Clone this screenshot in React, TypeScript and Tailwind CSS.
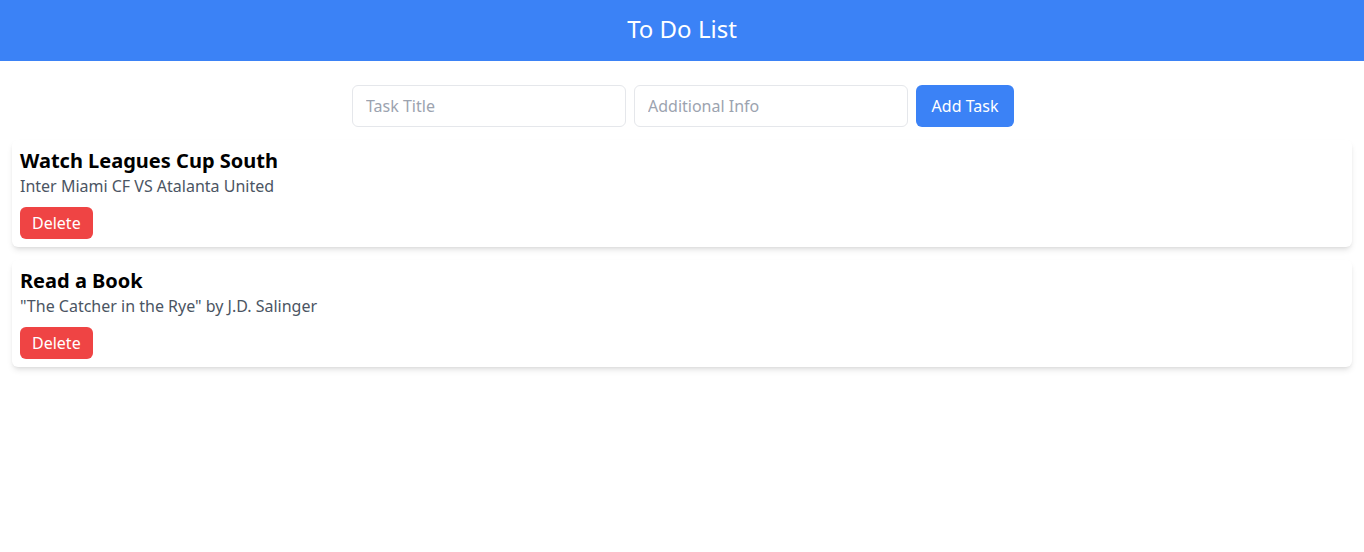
import React, { useState } from "react";

interface Task {
    id: number;
    title: string;
    info: string;
}

const initialTasks: Task[] = [
    { id: 1, title: "Watch Leagues Cup South", info: "Inter Miami CF VS Atalanta United" },
    { id: 2, title: "Read a Book", info: "\"The Catcher in the Rye\" by J.D. Salinger" },
];

export default function App() {
    const [tasks, setTasks] = useState<Task[]>(initialTasks);
    const [title, setTitle] = useState("");
    const [info, setInfo] = useState("");

    const handleAdd = (e: React.FormEvent) => {
        e.preventDefault();
        if (!title.trim()) return;
        setTasks([...tasks, { id: Date.now(), title, info }]);
        setTitle("");
        setInfo("");
    };

    const handleDelete = (id: number) => {
        setTasks(tasks.filter((t) => t.id !== id));
    };

    return (
        <div className="min-h-screen bg-white font-['Noto_Sans',sans-serif]">
            <header className="h-[61px] bg-[#3b82f6] flex items-center justify-center pb-1">
                <h1 className="text-2xl text-white">To Do List</h1>
            </header>

            <form onSubmit={handleAdd} className="flex justify-center gap-2 mt-6 mb-[13px] pl-0.5">
                <input
                    value={title}
                    onChange={(e) => setTitle(e.target.value)}
                    placeholder="Task Title"
                    className="w-[274px] h-[42px] px-[13px] border border-[#e5e7eb] rounded-md text-base placeholder:text-[#9ca3af] outline-none"
                />
                <input
                    value={info}
                    onChange={(e) => setInfo(e.target.value)}
                    placeholder="Additional Info"
                    className="w-[274px] h-[42px] px-[13px] border border-[#e5e7eb] rounded-md text-base placeholder:text-[#9ca3af] outline-none"
                />
                <button type="submit" className="w-[98px] h-[42px] bg-[#3b82f6] text-white rounded-md text-base">
                    Add Task
                </button>
            </form>

            <div className="flex flex-col gap-[13px] px-3">
                {tasks.map((task) => (
                    <div key={task.id} className="bg-white rounded-md shadow-md p-2">
                        <h2 className="text-xl font-bold text-black leading-[26px]">{task.title}</h2>
                        <p className="text-base text-[#4b5563] leading-6">{task.info}</p>
                        <button
                            onClick={() => handleDelete(task.id)}
                            className="mt-[9px] h-8 px-3 bg-[#ef4444] text-white rounded-md text-base"
                        >
                            Delete
                        </button>
                    </div>
                ))}
            </div>
        </div>
    );
}
